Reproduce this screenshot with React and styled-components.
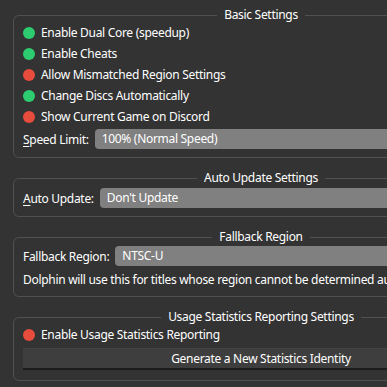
import styled, { createGlobalStyle } from "styled-components";

const GlobalStyle = createGlobalStyle`
  html, body {
    margin: 0;
    padding: 0;
    background: #333333;
    overflow: hidden;
  }
  body {
    font-family: "Noto Sans", "Open Sans", sans-serif;
    font-size: 12px;
    letter-spacing: -0.3px;
    color: #ffffff;
  }
`;

const Page = styled.div`
  width: 523px;
  box-sizing: border-box;
  padding: 8px 13px 0;
  display: flex;
  flex-direction: column;
  gap: 13px;
`;

const Group = styled.fieldset`
  margin: 0;
  padding: 0 10px ${(p) => p.$bottom || 8}px 9px;
  border: 1px solid #505050;
  border-radius: 6px;
  min-width: 0;
  display: flex;
  flex-direction: column;
`;

const Title = styled.legend`
  margin: 0 auto;
  padding: 0 7px;
  line-height: 14px;
  font-size: 12px;
  color: #ffffff;
`;

const Row = styled.div`
  height: 21px;
  display: flex;
  align-items: center;
  gap: 6px;
  white-space: nowrap;
`;

const Dot = styled.span`
  width: 12px;
  height: 12px;
  border-radius: 50%;
  flex: none;
  background: ${(p) => (p.$on ? "#2ecc71" : "#e74c3c")};
`;

const FieldRow = styled.div`
  display: flex;
  align-items: center;
  gap: 6px;
  margin-top: ${(p) => p.$top || 0}px;
  white-space: nowrap;
`;

const Label = styled.span`
  flex: none;
`;

const Key = styled.span`
  text-decoration: underline;
  text-underline-offset: 2px;
`;

const Combo = styled.div`
  flex: 1;
  height: 20px;
  line-height: 20px;
  background: #808080;
  border-radius: 4px;
  padding: 0 7px;
  color: #ffffff;
`;

const Note = styled.div`
  height: 20px;
  line-height: 20px;
  margin-top: 4px;
  white-space: nowrap;
`;

const Button = styled.button`
  margin-top: 3px;
  height: 22px;
  box-sizing: border-box;
  border: none;
  border-top: 1px solid #444444;
  border-bottom: 2px solid #1c1c1c;
  background: #3e3e3e;
  color: #ffffff;
  font-family: inherit;
  font-size: 12px;
  letter-spacing: inherit;
  padding: 0;
`;

const toggles = [
  { text: "Enable Dual Core (speedup)", on: true },
  { text: "Enable Cheats", on: true },
  { text: "Allow Mismatched Region Settings", on: false },
  { text: "Change Discs Automatically", on: true },
  { text: "Show Current Game on Discord", on: false },
];

export default function App() {
  return (
    <>
      <GlobalStyle />
      <Page>
        <Group>
          <Title>Basic Settings</Title>
          {toggles.map((t) => (
            <Row key={t.text}>
              <Dot $on={t.on} />
              {t.text}
            </Row>
          ))}
          <FieldRow $top={2}>
            <Label>
              <Key>S</Key>peed Limit:
            </Label>
            <Combo>100% (Normal Speed)</Combo>
          </FieldRow>
        </Group>

        <Group>
          <Title>Auto Update Settings</Title>
          <FieldRow $top={3}>
            <Label>
              <Key>A</Key>uto Update:
            </Label>
            <Combo>Don't Update</Combo>
          </FieldRow>
        </Group>

        <Group $bottom={6}>
          <Title>Fallback Region</Title>
          <FieldRow $top={2}>
            <Label>Fallback Region:</Label>
            <Combo>NTSC-U</Combo>
          </FieldRow>
          <Note>
            Dolphin will use this for titles whose region cannot be determined automatically.
          </Note>
        </Group>

        <Group $bottom={10}>
          <Title>Usage Statistics Reporting Settings</Title>
          <Row>
            <Dot $on={false} />
            Enable Usage Statistics Reporting
          </Row>
          <Button>Generate a New Statistics Identity</Button>
        </Group>
      </Page>
    </>
  );
}
